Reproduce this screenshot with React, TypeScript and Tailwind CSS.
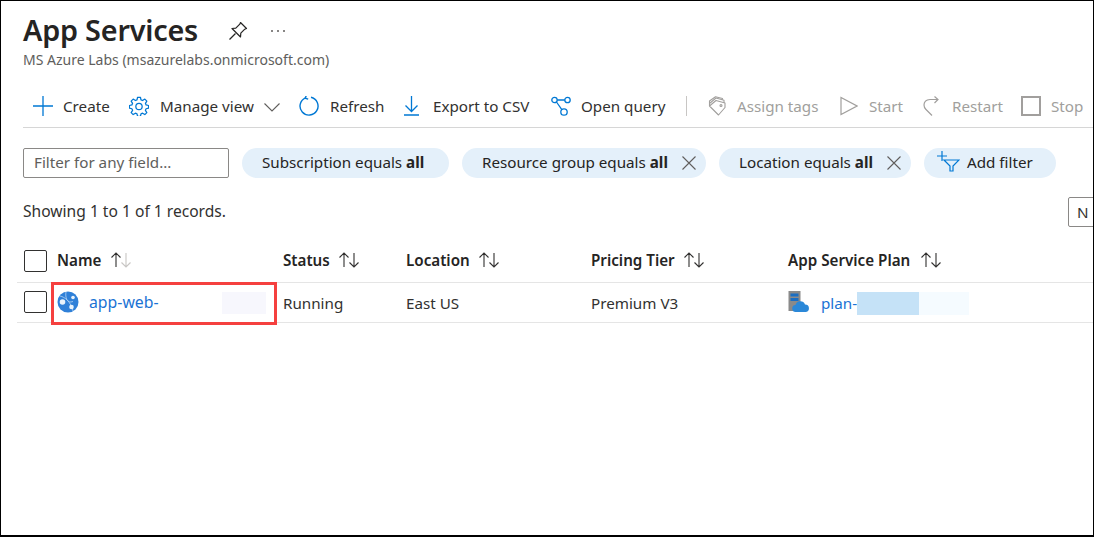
import React from "react";

const Blue = "#0078d4";
const Dis = "#a19f9d";

function Tool({ w, icon, label, gap = 10, disabled = false }: { w: number; icon: React.ReactNode; label: string; gap?: number; disabled?: boolean }) {
  return (
    <div className={disabled ? "flex items-center shrink-0 text-[#a19f9d]" : "flex items-center shrink-0 text-[#323130]"} style={{ width: w, gap }}>
      {icon}
      <span className="whitespace-nowrap">{label}</span>
    </div>
  );
}

function Sort({ downDim = false }: { downDim?: boolean }) {
  return (
    <svg width="22" height="18" viewBox="0 0 22 18" fill="none" strokeWidth="1.1" className="shrink-0">
      <path d="M6 16V2M1.500 6.500 6 2l4.500 4.500" stroke="#323130" />
      <path d="M16 2v14M11.500 11.500 16 16l4.500-4.500" stroke={downDim ? "#c8c6c4" : "#323130"} />
    </svg>
  );
}

function Pill({ text, close, w }: { text: string; close?: boolean; w: number }) {
  return (
    <div className="h-[30px] rounded-full bg-[#e4f0fa] flex items-center pl-[20px] pb-[2px] shrink-0 text-[#252423]" style={{ width: w }}>
      <span className="whitespace-nowrap">{text} <b className="font-bold">all</b></span>
      {close && (
        <svg width="16" height="16" viewBox="0 0 16 16" className="ml-[13px] mt-[2px] shrink-0" fill="none" stroke="#605e5c" strokeWidth="1.100">
          <path d="M1.500 1.500l13 13M14.500 1.500l-13 13" />
        </svg>
      )}
    </div>
  );
}

export default function App() {
  return (
    <div className="w-[1094px] h-[537px] border border-black border-b-2 bg-white overflow-hidden relative text-[15.200px] text-[#323130] font-['Noto_Sans','Open_Sans',sans-serif]">
      <div className="pl-[22px]">
        <div className="flex items-center h-[45px] pt-[14px]">
          <h1 className="text-[28.800px] font-semibold text-[#252423] tracking-[-0.2px] leading-none whitespace-nowrap">App Services</h1>
          <svg width="20" height="20" viewBox="0 0 20 20" fill="none" stroke="#252423" strokeWidth="1.200" className="ml-[30px] mt-[1px]">
            <path d="M12.500 1.500 18.500 7.500 16.800 8.200 12.800 12.200 12.500 16 4 7.500 7.800 7.200 11.800 3.200Z" strokeLinejoin="round" />
            <path d="M7.500 12.500 1.500 18.500" />
          </svg>
          <svg width="16" height="4" viewBox="0 0 16 4" className="ml-[22px] mt-[1px]" fill="#605e5c">
            <circle cx="2" cy="2" r="1" /><circle cx="8" cy="2" r="1" /><circle cx="14" cy="2" r="1" />
          </svg>
        </div>
        <div className="text-[14px] text-[#605e5c] leading-[18px] mt-[5px] whitespace-nowrap">MS Azure Labs (msazurelabs.onmicrosoft.com)</div>

        <div className="flex items-center h-[44px] mt-[15px] pl-[10px] border-b border-[#d6d6d6] pt-[1px] whitespace-nowrap">
          <Tool w={96} label="Create" icon={
            <svg width="20" height="20" viewBox="0 0 20 20" stroke={Blue} strokeWidth="1.300" fill="none"><path d="M10 0v20M0 10h20" /></svg>
          } />
          <Tool w={135} label="Manage view" gap={11} icon={
            <svg width="20" height="20" viewBox="0 0 24 24" stroke={Blue} strokeWidth="1.500" fill="none" strokeLinejoin="round">
              <path d="M10.300 1.500h3.400l.7 3.100 1.900.8 2.700-1.700 2.400 2.400-1.700 2.700.8 1.900 3 .7v3.200l-3 .7-.8 1.900 1.700 2.700-2.400 2.400-2.700-1.700-1.900.8-.7 3h-3.400l-.7-3-1.900-.8-2.700 1.700-2.400-2.400 1.700-2.700-.8-1.900-3-.7v-3.200l3-.7.8-1.900-1.700-2.700 2.400-2.400 2.700 1.700 1.900-.8z" />
              <circle cx="12" cy="12.500" r="3.800" />
            </svg>
          } />
          <svg width="16" height="9" viewBox="0 0 16 9" fill="none" stroke="#605e5c" strokeWidth="1.100" className="shrink-0 mr-[19px] mt-[2px]"><path d="M.5.500 8 8 15.500.500" /></svg>
          <Tool w={104} label="Refresh" gap={11} icon={
            <svg width="20" height="20" viewBox="0 0 20 20" stroke={Blue} strokeWidth="1.400" fill="none"><path d="M6.500 1.800A9 9 0 1 0 12 1.300" /><path d="M7.300-.5 6.200 2.200 9.200 3.200" /></svg>
          } />
          <Tool w={148} label="Export to CSV" gap={13} icon={
            <svg width="17" height="20" viewBox="0 0 17 20" stroke={Blue} strokeWidth="1.300" fill="none"><path d="M8.500 0v15M2.500 9.500l6 6 6-6M1 19h15" /></svg>
          } />
          <Tool w={135} label="Open query" gap={10} icon={
            <svg width="20" height="20" viewBox="0 0 20 20" stroke={Blue} strokeWidth="1.300" fill="none">
              <circle cx="3.500" cy="4" r="2.700" /><circle cx="16.500" cy="4" r="2.700" /><circle cx="13" cy="16" r="3.200" />
              <path d="M6.200 4h7.600M5.500 6l5.500 7.800" />
            </svg>
          } />
          <div className="w-px h-[20px] bg-[#c8c6c4] shrink-0 mr-[21px]" />
          <Tool w={132} label="Assign tags" gap={10} disabled icon={
            <svg width="19" height="20" viewBox="0 0 19 20" stroke={Dis} strokeWidth="1.100" fill="none" strokeLinejoin="round">
              <path d="M1.500 10 8 4.500l9 2.500v4.500L10.500 19z" />
              <path d="M1.500 10V7.500L8 2l8 2.200V7" />
              <path d="M1.500 7.500V5L7.500 .8l7 1.700v1.200" />
              <circle cx="13" cy="9.500" r="1" />
            </svg>
          } />
          <Tool w={83} label="Start" gap={11} disabled icon={
            <svg width="18" height="20" viewBox="0 0 18 20" stroke={Dis} strokeWidth="1.200" fill="none"><path d="M1 1.500v17L17 10z" /></svg>
          } />
          <Tool w={98} label="Restart" gap={10} disabled icon={
            <svg width="19" height="20" viewBox="0 0 19 20" stroke={Dis} strokeWidth="1.200" fill="none"><path d="M14.500 3.500H7Q1 4 1 9q0 2.500 2 4.500l6 6" /><path d="M11.500.5l3.500 3-3.500 3.500" /></svg>
          } />
          <Tool w={80} label="Stop" gap={10} disabled icon={
            <div className="w-[20px] h-[20px] border-2 border-[#a19f9d] shrink-0" />
          } />
        </div>

        <div className="flex items-center mt-[20px] h-[30px]">
          <div className="w-[206px] h-[30px] border border-[#8a8886] rounded-[2px] flex items-center pl-[10px] pb-[2px] text-[#605e5c] shrink-0 mr-[13px] whitespace-nowrap">Filter for any field...</div>
          <Pill text="Subscription equals" w={207} />
          <div className="w-[13px] shrink-0" />
          <Pill text="Resource group equals" close w={244} />
          <div className="w-[13px] shrink-0" />
          <Pill text="Location equals" close w={192} />
          <div className="w-[13px] shrink-0" />
          <div className="w-[132px] h-[30px] rounded-full bg-[#e4f0fa] flex items-center pl-[12px] pb-[2px] shrink-0 text-[#252423] whitespace-nowrap">
            <svg width="24" height="22" viewBox="0 0 24 22" fill="none" stroke={Blue} strokeWidth="1.200" className="mr-[7px] mb-[2px]">
              <path d="M6 1v10M1 6h10M8 10h15l-6 6v5h-3v-5z" />
            </svg>
            Add filter
          </div>
        </div>

        <div className="flex items-center mt-[19px] h-[30px] justify-between">
          <span className="whitespace-nowrap text-[15.600px]">Showing 1 to 1 of 1 records.</span>
          <div className="w-[40px] h-[30px] border border-[#8a8886] rounded-[2px] flex items-center pl-[8px] shrink-0 mr-[-15px]">N</div>
        </div>
      </div>

      <div className="grid grid-cols-[33px_226px_123px_185px_197px_1fr] h-[43px] mt-[13px] items-center font-semibold text-[#252423] ml-[16px] pl-[7px] pb-[1px] border-b border-[#e5e5e5] whitespace-nowrap">
        <div className="w-[23px] h-[22px] border border-[#323130] rounded-[2px] mt-[1px]" />
        <div className="flex items-center gap-[9px]">Name <Sort downDim /></div>
        <div className="flex items-center gap-[8px]">Status <Sort /></div>
        <div className="flex items-center gap-[8px]">Location <Sort /></div>
        <div className="flex items-center gap-[8px]">Pricing Tier <Sort /></div>
        <div className="flex items-center gap-[10px]">App Service Plan <Sort /></div>
      </div>
      <div className="grid grid-cols-[33px_226px_123px_185px_197px_1fr] h-[40px] pt-[1px] items-center ml-[16px] pl-[7px] border-b border-[#e5e5e5] whitespace-nowrap">
        <div className="w-[23px] h-[22px] border border-[#323130] rounded-[2px] mt-[-3px]" />
        <div className="flex items-center">
          <svg width="22" height="22" viewBox="0 0 22 22" className="shrink-0 mr-[10px] mt-[-3px]">
            <circle cx="11" cy="11" r="10.500" fill="#2f80d8" />
            <path d="M3 5c5 1 11 6 13 15M9 1c-1 5 1 12 7 9.500" fill="none" stroke="#a9cdf2" strokeWidth="0.900" />
            <circle cx="5.500" cy="11" r="2.800" fill="#e8f2fb" />
            <circle cx="14.500" cy="16" r="2.300" fill="#e8f2fb" />
            <circle cx="16" cy="6.500" r="1.800" fill="#e8f2fb" />
          </svg>
          <span className="text-[#1a73d4] text-[15.800px] w-[133px]">app-web-</span>
          <div className="w-[44px] h-[22px] bg-[#f7f7fd] shrink-0" />
        </div>
        <div>Running</div>
        <div>East US</div>
        <div>Premium V3</div>
        <div className="flex items-center">
          <svg width="22" height="22" viewBox="0 0 22 22" className="shrink-0 mr-[11px] mt-[-3px]">
            <rect x="0.500" y="0" width="12" height="20" fill="#8a8a8a" />
            <rect x="2.500" y="2.500" width="8" height="3" fill="#1b6ec2" />
            <rect x="2.500" y="7" width="8" height="3" fill="#1b6ec2" />
            <path d="M8 21a3.500 3.500 0 0 1-.5-7A5 5 0 0 1 17 13.500a3.800 3.800 0 0 1 1 7.500z" fill="#2b88d8" />
          </svg>
          <span className="text-[#1a73d4] w-[36px]">plan-</span>
          <div className="w-[62px] h-[23px] bg-[#c5e2f7] shrink-0" />
          <div className="w-[50px] h-[23px] bg-[#f5fbff] shrink-0" />
        </div>
      </div>
      <div className="absolute left-[50px] top-[281px] w-[226px] h-[43px] border-[3px] border-[#f5403f] pointer-events-none" />
    </div>
  );
}
